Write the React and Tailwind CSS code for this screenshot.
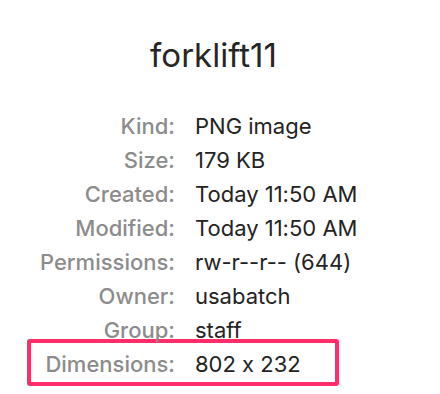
import React from "react";

const rows = [
  ["Kind:", "PNG image"],
  ["Size:", "179 KB"],
  ["Created:", "Today 11:50 AM"],
  ["Modified:", "Today 11:50 AM"],
  ["Permissions:", "rw-r--r-- (644)"],
  ["Owner:", "usabatch"],
  ["Group:", "staff"],
];

const Row = ({ label, value, labelWidth = "w-[175px]" }) => (
  <div className="flex h-[34px] items-center">
    <span className={`${labelWidth} text-right font-medium text-[#8c8c8c]`}>{label}</span>
    <span className="ml-5 text-[#232323]">{value}</span>
  </div>
);

export default function App() {
  return (
    <div className="w-[440px] h-[394px] overflow-hidden bg-white font-['Inter',sans-serif] text-[22px] [font-feature-settings:'calt'_0]">
      <h1 className="w-[427px] pt-[32px] text-center text-[33px] leading-[46px] text-[#262626]">
        forklift11
      </h1>
      <div className="mt-[31px]">
        {rows.map(([label, value]) => (
          <Row key={label} label={label} value={value} />
        ))}
        <div className="-mt-2 ml-[27px] w-[312px] rounded-[3px] border-4 border-[#ff2d6a] pt-1 pb-[1px]">
          <Row label="Dimensions:" value="802 x 232" labelWidth="w-[144px]" />
        </div>
      </div>
    </div>
  );
}
